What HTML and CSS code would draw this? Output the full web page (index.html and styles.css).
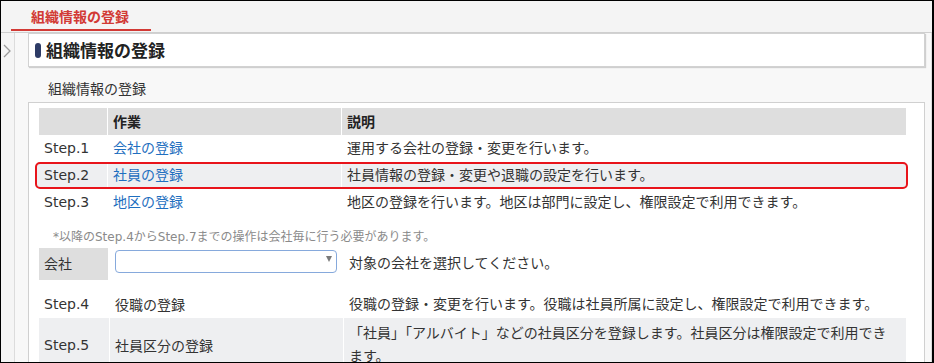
FILE: index.html
```html
<!DOCTYPE html>
<html lang="ja">
<head>
<meta charset="utf-8">
<title>組織情報の登録</title>
<link rel="stylesheet" href="styles.css">
</head>
<body>
<div class="frame">
  <div class="tabbar">
    <div class="tab">組織情報の登録</div>
  </div>
  <div class="layout">
    <aside class="side">
      <svg class="chev" width="8" height="14" viewBox="0 0 8 14"><polyline points="1,1 7,7 1,13" fill="none" stroke="#9a9a9a" stroke-width="1.3"/></svg>
    </aside>
    <main class="main">
      <div class="titlecard">
        <span class="pill"></span>
        <h1 class="title">組織情報の登録</h1>
      </div>
      <div class="section-label">組織情報の登録</div>
      <div class="panel">
        <div class="steps">
          <div class="row head">
            <div class="c1"></div>
            <div class="c2">作業</div>
            <div class="c3">説明</div>
          </div>
          <div class="row">
            <div class="c1">Step.1</div>
            <div class="c2"><a class="link" href="#">会社の登録</a></div>
            <div class="c3">運用する会社の登録・変更を行います。</div>
          </div>
          <div class="row hl">
            <div class="c1">Step.2</div>
            <div class="c2"><a class="link" href="#">社員の登録</a></div>
            <div class="c3">社員情報の登録・変更や退職の設定を行います。</div>
          </div>
          <div class="row">
            <div class="c1">Step.3</div>
            <div class="c2"><a class="link" href="#">地区の登録</a></div>
            <div class="c3">地区の登録を行います。地区は部門に設定し、権限設定で利用できます。</div>
          </div>
        </div>
        <p class="note">*以降のStep.4からStep.7までの操作は会社毎に行う必要があります。</p>
        <div class="company">
          <div class="company-label">会社</div>
          <div class="select"><span class="caret"></span></div>
          <div class="company-desc">対象の会社を選択してください。</div>
        </div>
        <div class="steps2">
          <div class="row2">
            <div class="d1">Step.4</div>
            <div class="d2">役職の登録</div>
            <div class="d3">役職の登録・変更を行います。役職は社員所属に設定し、権限設定で利用できます。</div>
          </div>
          <div class="row2 alt">
            <div class="d1">Step.5</div>
            <div class="d2">社員区分の登録</div>
            <div class="d3">「社員」「アルバイト」などの社員区分を登録します。社員区分は権限設定で利用できます。</div>
          </div>
        </div>
      </div>
    </main>
  </div>
</div>
</body>
</html>
```

FILE: styles.css
```css
* { box-sizing: border-box; }
html, body { margin: 0; padding: 0; background: #fff; }
body {
  font-family: "DejaVu Sans", "Noto Sans CJK JP", sans-serif;
  font-size: 14px;
  color: #333;
}
.frame {
  width: 934px;
  height: 363px;
  border: 1px solid #000;
  border-right-width: 2px;
  overflow: hidden;
  display: flex;
  flex-direction: column;
}
.tabbar {
  height: 32px;
  flex: none;
  background: #f4f4f4;
  border-bottom: 1px solid #cfcfcf;
  padding-left: 10px;
  display: flex;
}
.tab {
  width: 140px;
  height: 30px;
  border-bottom: 2px solid #d23a35;
  color: #d23a35;
  font-family: "Noto Sans CJK JP", sans-serif;
  font-weight: 700;
  font-size: 14px;
  line-height: 30px;
  text-align: center;
  padding-right: 2px;
}
.layout {
  flex: 1;
  display: flex;
  min-height: 0;
}
.side {
  width: 14px;
  flex: none;
  background: #f5f5f5;
  border-right: 1px solid #dcdcdc;
  padding: 11px 0 0 2px;
}
.chev { display: block; }
.main {
  flex: 1;
  background: #f8f8f8;
  border-right: 1px solid #dcdcdc;
  padding: 0 6px 0 13px;
}
.titlecard {
  height: 34px;
  background: #fff;
  border: 1px solid #d2d2d2;
  box-shadow: 1px 1px 1px #cfcfcf;
  display: flex;
  align-items: center;
  padding-left: 6px;
}
.pill {
  width: 6px;
  height: 15px;
  border-radius: 3px;
  background: #2d3b66;
  margin-right: 5px;
}
.title {
  margin: 0;
  font-family: "Noto Sans CJK JP", sans-serif;
  font-size: 17px;
  font-weight: 700;
  color: #222;
  line-height: 20px;
}
.section-label {
  font-family: "Noto Sans CJK JP", sans-serif;
  height: 35px;
  line-height: 18px;
  padding: 12px 0 0 20px;
  color: #333;
}
.panel {
  background: #fff;
  border: 1px solid #d0d0d0;
  border-bottom: none;
  padding: 5px 18px 20px 10px;
  height: 300px;
}
.row {
  display: grid;
  grid-template-columns: 68px 234px 1fr;
  height: 27px;
  line-height: 27px;
}
.row > div { padding-left: 5px; white-space: nowrap; }
.row > .c2, .row > .c3 { border-left: 1px solid #fff; }
.head {
  background: #dedede;
  font-family: "Noto Sans CJK JP", sans-serif;
  font-weight: 700;
  color: #222;
}
.row.hl {
  background: #eeeff1;
  border: 2px solid #e8141b;
  border-radius: 5px;
  margin: 0 -2px 0 -4px;
  padding-left: 2px;
  line-height: 23px;
}
.link { color: #1f6fc0; text-decoration: none; }
.note {
  margin: 13px 0 0 14px;
  font-size: 12px;
  line-height: 16px;
  color: #8a8a8a;
  height: 19px;
}
.company {
  display: flex;
  align-items: center;
  height: 32px;
}
.company-label {
  width: 69px;
  height: 32px;
  background: #dedede;
  line-height: 32px;
  padding-left: 5px;
  align-self: stretch;
}
.select {
  position: relative;
  width: 222px;
  height: 23px;
  margin: 2px 12px 0 7px;
  border: 1px solid #86a9dc;
  border-radius: 4px;
  background: #fff;
  align-self: flex-start;
}
.caret {
  position: absolute;
  top: 5px;
  right: 4px;
  width: 0;
  height: 0;
  border-left: 3px solid transparent;
  border-right: 3px solid transparent;
  border-top: 6px solid #7a7a7a;
}
.company-desc { line-height: 20px; margin-top: -3px; }
.steps2 { margin-top: 10px; }
.row2 {
  display: grid;
  grid-template-columns: 70px 234px 1fr;
  min-height: 28px;
}
.row2 > div { padding-left: 5px; display: flex; align-items: center; }
.row2 > .d2, .row2 > .d3 { border-left: 1px solid #fff; }
.row2 > .d3 { padding-right: 10px; line-height: 23px; }
.row2.alt { background: #eeeff1; }
.row2.alt > .d3 { padding-top: 4px; padding-bottom: 2px; }
.row2.alt > .d1, .row2.alt > .d2 { padding-top: 2px; }
```
